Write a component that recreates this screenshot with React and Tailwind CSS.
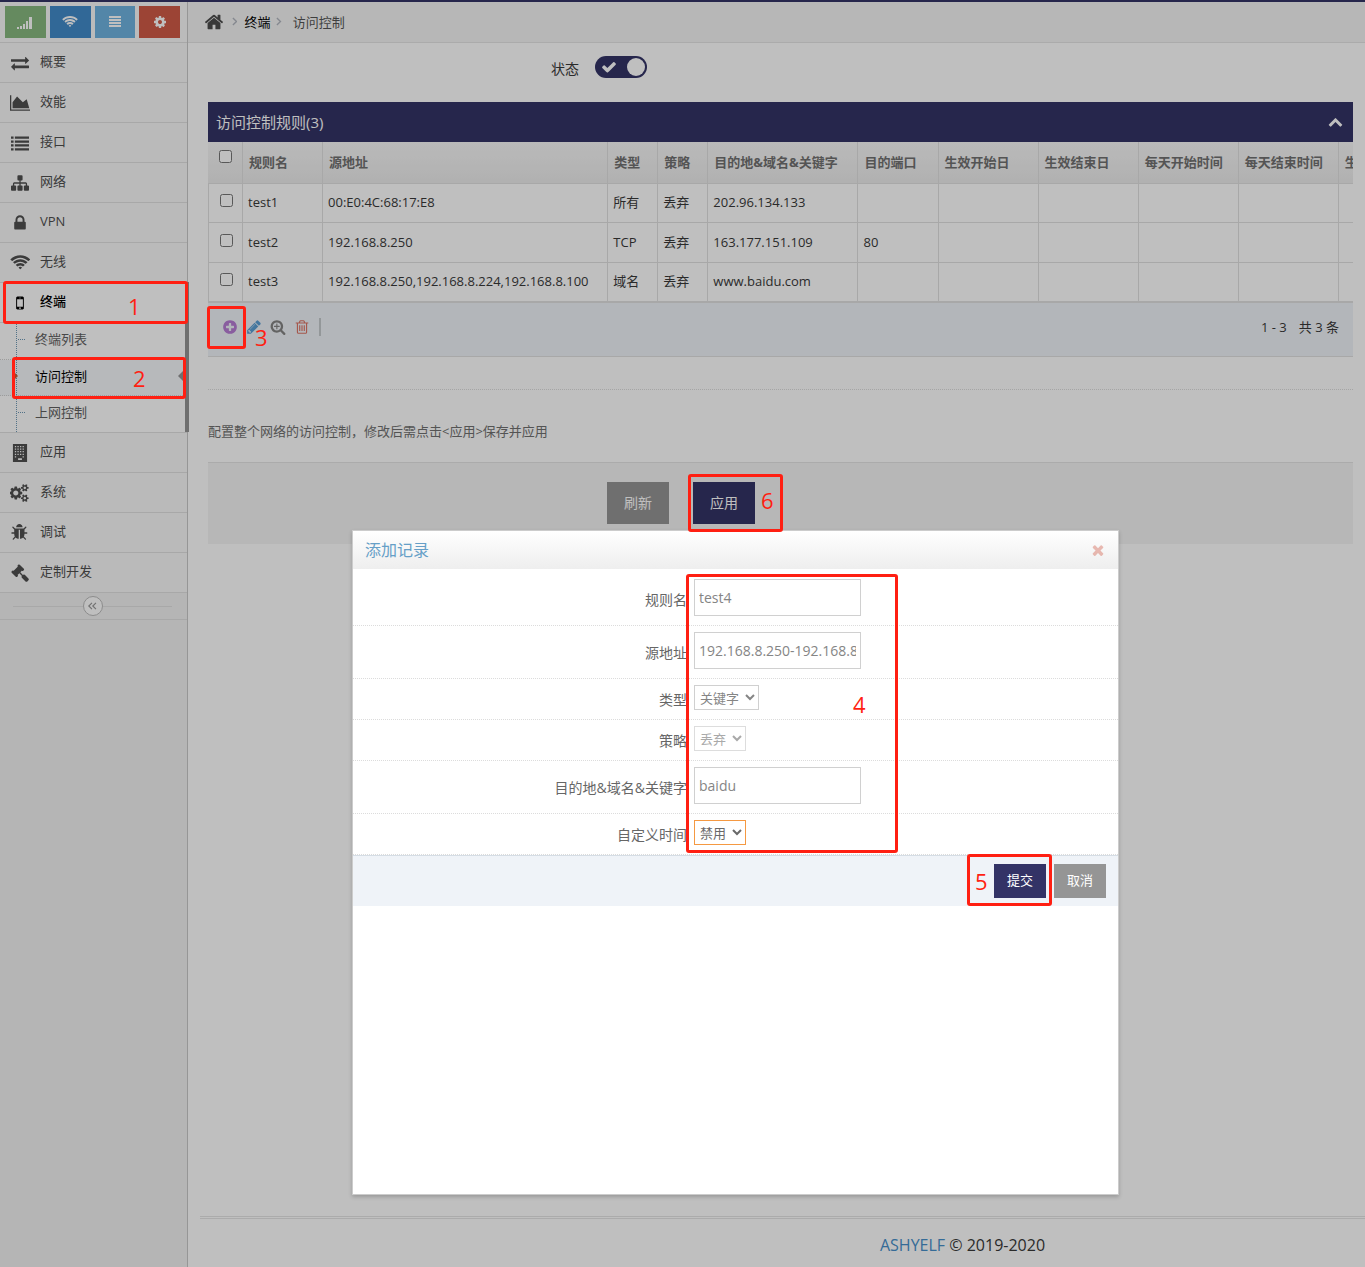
import React from "react";

const PATHS = {
  home: [1792, "M1472 992v480q0 26-19 45t-45 19h-384v-384h-256v384h-384q-26 0-45-19t-19-45v-480q0-1 .5-3t.5-3l575-474 575 474q1 2 1 6zm223-69l-62 74q-8 9-21 11h-3q-13 0-21-7l-692-577-692 577q-12 8-24 7-13-2-21-11l-62-74q-8-10-7-23.5t11-21.5l719-599q32-26 76-26t76 26l244 204v-195q0-14 9-23t23-9h192q14 0 23 9t9 23v408l219 182q10 8 11 21.5t-7 23.5z"],
  cog: [1792, "M1152 896q0-106-75-181t-181-75-181 75-75 181 75 181 181 75 181-75 75-181zm512-109v222q0 12-8 23t-20 13l-185 28q-19 54-39 91 35 50 107 138 10 12 10 25t-9 23q-27 37-99 108t-94 71q-12 0-26-9l-138-108q-44 23-91 38-16 136-29 186-7 28-36 28h-222q-14 0-24.5-8.5t-11.5-21.5l-28-184q-49-16-90-37l-141 107q-10 9-25 9-14 0-25-11-126-114-165-168-7-10-7-23 0-12 8-23 15-21 51-66.5t54-70.5q-27-50-41-99l-183-27q-13-2-21-12.5t-8-23.5v-222q0-12 8-23t19-13l186-28q14-46 39-92-40-57-107-138-10-12-10-24 0-10 9-23 26-36 98.5-107.5t94.5-71.5q13 0 26 10l138 107q44-23 91-38 16-136 29-186 7-28 36-28h222q14 0 24.5 8.5t11.5 21.5l28 184q49 16 90 37l142-107q9-9 24-9 13 0 25 10 129 119 165 170 7 8 7 22 0 12-8 23-15 21-51 66.5t-54 70.5q26 50 41 98l183 28q13 2 21 12.5t8 23.5z"],
  lock: [1792, "M640 768h512v-192q0-106-75-181t-181-75-181 75-75 181v192zm832 96v576q0 40-28 68t-68 28h-960q-40 0-68-28t-28-68v-576q0-40 28-68t68-28h32v-192q0-184 132-316t316-132 316 132 132 316v192h32q40 0 68 28t28 68z"],
  list: [1792, "M0 256h256v224H0zM384 256h1408v224H384zM0 640h256v224H0zM384 640h1408v224H384zM0 1024h256v224H0zM384 1024h1408v224H384zM0 1408h256v224H0zM384 1408h1408v224H384z"],
  justify: [1792, "M128 128h1536v256H128zM128 512h1536v256H128zM128 896h1536v256H128zM128 1280h1536v256H128z"],
  signal: [1904, "M0 1456h224v224H0zM336 1344h224v336H336zM672 1120h224v560H672zM1008 784h224v896h-224zM1344 336h336v1344h-336z"],
  sitemap: [1792, "M1792 1248v320q0 40-28 68t-68 28h-320q-40 0-68-28t-28-68v-320q0-40 28-68t68-28h96v-192h-512v192h96q40 0 68 28t28 68v320q0 40-28 68t-68 28h-320q-40 0-68-28t-28-68v-320q0-40 28-68t68-28h96v-192h-512v192h96q40 0 68 28t28 68v320q0 40-28 68t-68 28h-320q-40 0-68-28t-28-68v-320q0-40 28-68t68-28h96v-192q0-52 38-90t90-38h512v-192h-96q-40 0-68-28t-28-68v-320q0-40 28-68t68-28h320q40 0 68 28t28 68v320q0 40-28 68t-68 28h-96v192h512q52 0 90 38t38 90v192h96q40 0 68 28t28 68z"],
  exchange: [1792, "M1792 1184v192q0 13-9.5 22.5t-22.5 9.5h-1376v192q0 13-9.5 22.5t-22.5 9.5q-12 0-24-10l-319-320q-9-9-9-22 0-14 9-23l320-320q9-9 23-9 13 0 22.5 9.5t9.5 22.5v192h1376q13 0 22.5 9.5t9.5 22.5zm0-544q0 14-9 23l-320 320q-9 9-23 9-13 0-22.5-9.5t-9.5-22.5v-192h-1376q-13 0-22.5-9.5t-9.5-22.5v-192q0-13 9.5-22.5t22.5-9.5h1376v-192q0-14 9-23t23-9q12 0 24 10l319 319q9 9 9 23z"],
  area: [2048, "M2048 1536v128h-2048v-1536h128v1408h1920zm-384-1024l256 896h-1664v-576l448-576 576 576z"],
  mobile: [1792, "M976 1408q0-33-23.5-56.5t-56.5-23.5-56.5 23.5-23.5 56.5 23.5 56.5 56.5 23.5 56.5-23.5 23.5-56.5zm208-160v-704q0-13-9.5-22.5t-22.5-9.5h-512q-13 0-22.5 9.5t-9.5 22.5v704q0 13 9.5 22.5t22.5 9.5h512q13 0 22.5-9.5t9.5-22.5zm-192-848q0-16-16-16h-160q-16 0-16 16t16 16h160q16 0 16-16zm288-16v1024q0 52-38 90t-90 38h-512q-52 0-90-38t-38-90v-1024q0-52 38-90t90-38h512q52 0 90 38t38 90z"],
  plus: [1792, "M1344 960v-128q0-26-19-45t-45-19h-256v-256q0-26-19-45t-45-19h-128q-26 0-45 19t-19 45v256h-256q-26 0-45 19t-19 45v128q0 26 19 45t45 19h256v256q0 26 19 45t45 19h128q26 0 45-19t19-45v-256h256q26 0 45-19t19-45zm320-64q0 209-103 385.5t-279.5 279.5-385.5 103-385.5-103-279.5-279.5-103-385.5 103-385.5 279.5-279.5 385.5-103 385.5 103 279.5 279.5 103 385.5z"],
  pencil: [1792, "M491 1536l91-91-235-235-91 91v107h128v128h107zm523-928q0-22-22-22-10 0-17 7l-542 542q-7 7-7 17 0 22 22 22 10 0 17-7l542-542q7-7 7-17zm-54-192l416 416-832 832h-416v-416zm683 96q0 53-37 90l-166 166-416-416 166-165q36-38 90-38 53 0 91 38l235 234q37 39 37 91z"],
  zoom: [1792, "M1088 800v64q0 13-9.5 22.5t-22.5 9.5h-224v224q0 13-9.5 22.5t-22.5 9.5h-64q-13 0-22.5-9.5t-9.5-22.5v-224h-224q-13 0-22.5-9.5t-9.5-22.5v-64q0-13 9.5-22.5t22.5-9.5h224v-224q0-13 9.5-22.5t22.5-9.5h64q13 0 22.5 9.5t9.5 22.5v224h224q13 0 22.5 9.5t9.5 22.5zm128 32q0-185-131.5-316.5t-316.5-131.5-316.5 131.5-131.5 316.5 131.5 316.5 316.5 131.5 316.5-131.5 131.5-316.5zm512 832q0 53-37.5 90.5t-90.5 37.5q-54 0-90-38l-343-342q-179 124-399 124-143 0-273.5-55.5t-225-150-150-225-55.5-273.5 55.5-273.5 150-225 225-150 273.5-55.5 273.5 55.5 225 150 150 225 55.5 273.5q0 220-124 399l343 343q37 37 37 90z"],
  trash: [1792, "M704 736v576q0 14-9 23t-23 9h-64q-14 0-23-9t-9-23v-576q0-14 9-23t23-9h64q14 0 23 9t9 23zm256 0v576q0 14-9 23t-23 9h-64q-14 0-23-9t-9-23v-576q0-14 9-23t23-9h64q14 0 23 9t9 23zm256 0v576q0 14-9 23t-23 9h-64q-14 0-23-9t-9-23v-576q0-14 9-23t23-9h64q14 0 23 9t9 23zm128 724v-948h-896v948q0 22 7 40.5t14.5 27 10.5 8.5h832q3 0 10.5-8.5t14.5-27 7-40.5zm-672-1076h448l-48-117q-7-9-17-11h-317q-10 2-17 11zm928 32v64q0 14-9 23t-23 9h-96v948q0 83-47 143.5t-113 60.5h-832q-66 0-113-58.5t-47-141.5v-952h-96q-14 0-23-9t-9-23v-64q0-14 9-23t23-9h309l70-167q15-37 54-63t79-26h320q40 0 79 26t54 63l70 167h309q14 0 23 9t9 23z"],
  up: [1792, "M1683 1331l-166 165q-19 19-45 19t-45-19l-531-531-531 531q-19 19-45 19t-45-19l-166-165q-19-19-19-45.5t19-45.5l742-741q19-19 45-19t45 19l742 741q19 19 19 45.5t-19 45.5z"],
  check: [1792, "M1671 566q0 40-28 68l-724 724-136 136q-28 28-68 28t-68-28l-136-136-362-362q-28-28-28-68t28-68l136-136q28-28 68-28t68 28l294 295 656-657q28-28 68-28t68 28l136 136q28 28 28 68z"],
  times: [1792, "M1490 1322q0 40-28 68l-136 136q-28 28-68 28t-68-28l-294-294-294 294q-28 28-68 28t-68-28l-136-136q-28-28-28-68t28-68l294-294-294-294q-28-28-28-68t28-68l136-136q28-28 68-28t68 28l294 294 294-294q28-28 68-28t68 28l136 136q28 28 28 68t-28 68l-294 294 294 294q28 28 28 68z"],
  wifi: [2048, "M1024 1523q-20 0-93-73.5t-73-93.5q0-32 62.5-54t103.5-22 103.5 22 62.5 54q0 20-73 93.5t-93 73.5zm270-271q-2 0-40-25t-101.5-50-128.5-25-128.5 25-101 50-40.5 25q-18 0-93.5-75t-75.5-93q0-13 10-23 78-77 196-121t233-44 233 44 196 121q10 10 10 23 0 18-75.5 93t-93.5 75zm273-272q-11 0-23-8-136-105-252-154.5t-268-49.5q-85 0-170.5 22t-149 53-113.5 62-79 53-31 22q-17 0-92-75t-75-93q0-12 10-22 132-132 320-205t380-73 380 73 320 205q10 10 10 22 0 18-75 93t-92 75zm271-271q-11 0-22-9-179-157-371.5-236.5t-420.5-79.5-420.5 79.5-371.5 236.5q-11 9-22 9-17 0-92.5-75t-75.5-93q0-13 10-23 187-186 445-288t527-102 527 102 445 288q10 10 10 23 0 18-75.5 93t-92.5 75z"],
  building: [1792, "M192 0h1408v1792H192zM384 192v128h128v-128zM640 192v128h128v-128zM896 192v128h128v-128zM1152 192v128h128v-128zM384 448v128h128v-128zM640 448v128h128v-128zM896 448v128h128v-128zM1152 448v128h128v-128zM384 704v128h128v-128zM640 704v128h128v-128zM896 704v128h128v-128zM1152 704v128h128v-128zM384 960v128h128v-128zM640 960v128h128v-128zM896 960v128h128v-128zM1152 960v128h128v-128zM384 1216v128h128v-128zM1152 1216v128h128v-128zM704 1408v192h384v-192z"],
  cogs: [1920, "M832 896q0-106-75-181t-181-75-181 75-75 181 75 181 181 75 181-75 75-181zm768 512q0-52-38-90t-90-38-90 38-38 90q0 53 37.5 90.5t90.5 37.5 90.5-37.5 37.5-90.5zm0-1024q0-52-38-90t-90-38-90 38-38 90q0 53 37.5 90.5t90.5 37.5 90.5-37.5 37.5-90.5zm-384 421v185q0 10-7 19.5t-16 10.5l-155 24q-11 35-32 76 34 48 90 115 7 11 7 20 0 12-7 19-23 30-82.5 89.5t-78.5 59.5q-11 0-21-7l-115-90q-37 19-77 31-11 108-23 155-7 24-30 24h-186q-11 0-20-7.5t-10-17.5l-23-153q-34-10-75-31l-118 89q-7 7-20 7-11 0-21-8-144-133-144-160 0-9 7-19 10-14 41-53t47-61q-23-44-35-82l-152-24q-10-1-17-9.5t-7-19.5v-185q0-10 7-19.5t16-10.5l155-24q11-35 32-76-34-48-90-115-7-11-7-20 0-12 7-20 22-30 82-89t79-59q11 0 21 7l115 90q34-18 77-32 11-108 23-154 7-24 30-24h186q11 0 20 7.5t10 17.5l23 153q34 10 75 31l118-89q8-7 20-7 11 0 21 8 144 133 144 160 0 8-7 19-12 16-42 54t-45 60q23 48 34 82l152 23q10 2 17 10.5t7 19.5zm640 533v140q0 16-149 31-12 27-30 52 51 113 51 138 0 4-4 7-122 71-124 71-8 0-46-47t-52-68q-20 2-30 2t-30-2q-14 21-52 68t-46 47q-2 0-124-71-4-3-4-7 0-25 51-138-18-25-30-52-149-15-149-31v-140q0-16 149-31 13-29 30-52-51-113-51-138 0-4 4-7 4-2 35-20t59-34 30-16q8 0 46 46.5t52 67.5q20-2 30-2t30 2q51-71 92-112l6-2q4 0 124 70 4 3 4 7 0 25-51 138 17 23 30 52 149 15 149 31zm0-1024v140q0 16-149 31-12 27-30 52 51 113 51 138 0 4-4 7-122 71-124 71-8 0-46-47t-52-68q-20 2-30 2t-30-2q-14 21-52 68t-46 47q-2 0-124-71-4-3-4-7 0-25 51-138-18-25-30-52-149-15-149-31v-140q0-16 149-31 13-29 30-52-51-113-51-138 0-4 4-7 4-2 35-20t59-34 30-16q8 0 46 46.5t52 67.5q20-2 30-2t30 2q51-71 92-112l6-2q4 0 124 70 4 3 4 7 0 25-51 138 17 23 30 52 149 15 149 31z"],
  bug: [1792, "M1632 896q0 26-19 45t-45 19h-224q0 171-67 290l208 209q19 19 19 45t-19 45q-18 19-45 19t-45-19l-198-197q-5 5-15 13t-42 28.5-65 36.5-82 29-97 13v-896h-128v896q-51 0-101.5-13.5t-87-33-66-39-43.5-32.5l-15-14-183 207q-20 21-48 21-24 0-43-16-19-18-20.5-44.5t15.5-46.5l202-227q-58-114-58-274h-224q-26 0-45-19t-19-45 19-45 45-19h224v-294l-173-173q-19-19-19-45t19-45 45-19 45 19l173 173h844l173-173q19-19 45-19t45 19 19 45-19 45l-173 173v294h224q26 0 45 19t19 45zm-480-576h-640q0-133 93.5-226.5t226.5-93.5 226.5 93.5 93.5 226.5z"],
  gavel: [1792, "M1771 1536q0 53-37 90l-107 108q-39 37-91 37-53 0-90-37l-363-364q-38-36-38-90 0-53 43-96l-256-256-126 126q-14 14-34 14t-34-14q2 2 12.5 12t12.5 13 10 11.5 10 13.5 6 13.5 5.5 16.5 1.5 18q0 38-28 68-3 3-16.5 18t-19 20.5-18.5 16.5-22 15.5-22 9-26 4.5q-40 0-68-28l-408-408q-28-28-28-68 0-13 4.5-26t9-22 15.5-22 16.5-18.5 20.5-19 18-16.5q30-28 68-28 10 0 18 1.5t16.5 5.5 13.5 6 13.5 10 11.5 10 13 12.5 12 12.5q-14-14-14-34t14-34l348-348q14-14 34-14t34 14q-2-2-12.5-12t-12.5-13-10-11.5-10-13.5-6-13.5-5.5-16.5-1.5-18q0-38 28-68 3-3 16.5-18t19-20.5 18.5-16.5 22-15.5 22-9 26-4.5q40 0 68 28l408 408q28 28 28 68 0 13-4.5 26t-9 22-15.5 22-16.5 18.5-20.5 19-18 16.5q-30 28-68 28-10 0-18-1.5t-16.5-5.5-13.5-6-13.5-10-11.5-10-13-12.5-12-12.5q14 14 14 34t-14 34l-126 126 256 256q43-43 96-43 52 0 91 37l363 363q37 39 37 91z"],
};

function Icon({ name, className = "h-4" }) {
  const [w, d] = PATHS[name];
  return (
    <svg viewBox={`0 0 ${w} 1792`} className={`block w-auto shrink-0 ${className}`} fill="currentColor" fillRule={name === "building" ? "evenodd" : "nonzero"} aria-hidden="true">
      <path d={d} />
    </svg>
  );
}

function Angle({ className = "h-[9px]" }) {
  return (
    <svg viewBox="0 0 6 10" className={`block w-auto ${className}`} fill="none" stroke="currentColor" strokeWidth="1.5" aria-hidden="true">
      <path d="M1 1l4 4-4 4" />
    </svg>
  );
}

const SHORTCUTS = [
  ["signal", "信号", "bg-[#87b87f]"],
  ["wifi", "无线网络", "bg-[#428bca]"],
  ["justify", "列表", "bg-[#6fb3e0]"],
  ["cog", "设置", "bg-[#d15b47]"],
];

const MENU_TOP = [
  ["exchange", "概要"],
  ["area", "效能"],
  ["list", "接口"],
  ["sitemap", "网络"],
  ["lock", "VPN"],
  ["wifi", "无线"],
];

const MENU_BOTTOM = [
  ["building", "应用"],
  ["cogs", "系统"],
  ["bug", "调试"],
  ["gavel", "定制开发"],
];

const SUBMENU = [
  ["终端列表", false],
  ["访问控制", true],
  ["上网控制", false],
];

function MenuItem({ icon, label, active }) {
  return (
    <li className={`border-t border-[#e0e0e0] ${active ? "bg-white text-black" : "text-[#4f4f4f]"}`}>
      <a href="#" className="flex h-[39px] items-center pb-1">
        <span className="flex w-10 justify-center pt-1">
          <Icon name={icon} className="h-[18px]" />
        </span>
        <span className={active ? "font-medium" : ""}>{label}</span>
      </a>
    </li>
  );
}

function Sidebar() {
  return (
    <aside className="w-[188px] shrink-0 border-r border-[#c8c8c8] bg-[#f2f2f2]">
      <div className="flex h-10 gap-1 bg-[#fafafa] py-1 pr-[7px] pl-[5px]">
        {SHORTCUTS.map(([icon, label, bg]) => (
          <button key={icon} type="button" aria-label={label} className={`flex flex-1 items-center justify-center text-white ${bg}`}>
            <Icon name={icon} className={icon === "signal" ? "h-4" : "h-[14px]"} />
          </button>
        ))}
      </div>
      <ul className="bg-[#f8f8f8] text-[13px]">
        {MENU_TOP.map(([icon, label]) => (
          <MenuItem key={label} icon={icon} label={label} />
        ))}
        <li className="relative bg-white">
          <ul>
            <MenuItem icon="mobile" label="终端" active />
          </ul>
          <ul className="border-t border-[#e0e0e0]">
            {SUBMENU.map(([label, active]) => (
              <li key={label} className={`relative h-9 border-b border-dotted border-[#d0d0d0] first:h-[37px] last:border-none ${active ? "bg-[#f5f7fa] text-black" : "text-[#616161]"}`}>
                <a href="#" className="flex h-full items-center pb-1 pl-[35px]">{label}</a>
                <span className="absolute inset-y-0 left-4 border-l border-dotted border-[#6d97b5]" />
                {active ? (
                  <>
                    <span className="absolute top-3 left-[14px] border-y-4 border-l-4 border-y-transparent border-l-[#c86139]" />
                    <span className="absolute top-[9px] right-[2px] border-y-[7px] border-r-[7px] border-y-transparent border-r-[#959595]" />
                  </>
                ) : (
                  <span className="absolute top-4 left-[18px] w-[7px] border-t border-dotted border-[#6d97b5]" />
                )}
              </li>
            ))}
          </ul>
          <span className="absolute inset-y-0 -right-[2px] w-1 bg-[#959595]" />
        </li>
        {MENU_BOTTOM.map(([icon, label]) => (
          <MenuItem key={label} icon={icon} label={label} />
        ))}
      </ul>
      <div className="flex h-7 items-center border-y border-[#e0e0e0] px-[13px]">
        <span className="flex-1 border-t border-[#e0e0e0]" />
        <button type="button" aria-label="收起菜单" className="flex h-5 w-5 items-center justify-center rounded-full border border-[#bbb] bg-white text-[#999]">
          <Angle className="h-2 rotate-180" />
          <Angle className="-ml-px h-2 rotate-180" />
        </button>
        <span className="mr-[2px] flex-1 border-t border-[#e0e0e0]" />
      </div>
    </aside>
  );
}

const COLUMNS = [
  ["规则名", "w-[80px]"],
  ["源地址", "w-[285px]"],
  ["类型", "w-[50px]"],
  ["策略", "w-[50px]"],
  ["目的地&域名&关键字", "w-[150px]"],
  ["目的端口", "w-[80px]"],
  ["生效开始日", "w-[100px]"],
  ["生效结束日", "w-[100px]"],
  ["每天开始时间", "w-[100px]"],
  ["每天结束时间", "w-[100px]"],
  ["生效星期", "w-[100px]"],
];

const ROWS = [
  ["test1", "00:E0:4C:68:17:E8", "所有", "丢弃", "202.96.134.133", "", "", "", "", "", ""],
  ["test2", "192.168.8.250", "TCP", "丢弃", "163.177.151.109", "80", "", "", "", "", ""],
  ["test3", "192.168.8.250,192.168.8.224,192.168.8.100", "域名", "丢弃", "www.baidu.com", "", "", "", "", "", ""],
];

function RulesTable() {
  return (
    <section>
      <header className="flex h-10 items-center justify-between bg-[#333366] pr-[10px] pl-2 text-white">
        <h2 className="text-[15px]">访问控制规则(3)</h2>
        <button type="button" aria-label="折叠" className="pb-[2px]">
          <Icon name="up" className="h-[15px]" />
        </button>
      </header>
      <div className="overflow-hidden border-b border-[#e1e1e1]">
        <table className="w-[1231px] min-w-full table-fixed border-separate border-spacing-0 text-left text-[13px] whitespace-nowrap">
          <thead>
            <tr className="h-[42px] bg-linear-to-b from-[#f8f8f8] to-[#ececec] text-[#707070]">
              <th className="w-[35px] border-r border-b border-[#e1e1e1] pb-3 text-center">
                <input type="checkbox" aria-label="全选" className="block mx-auto size-[13px]" />
              </th>
              {COLUMNS.map(([label, w]) => (
                <th key={label} className={`border-r border-b border-[#e1e1e1] px-[6px] pb-[2px] font-bold ${w}`}>{label}</th>
              ))}
            </tr>
          </thead>
          <tbody>
            {ROWS.map((row) => (
              <tr key={row[0]} className="h-[39px] text-[#393939] even:h-10">
                <td className="border-r border-b border-l border-[#e1e1e1] pb-[5px] pl-[2px]">
                  <input type="checkbox" aria-label={row[0]} className="block mx-auto size-[13px]" />
                </td>
                {row.map((cell, i) => (
                  <td key={i} className="border-r border-b border-[#e1e1e1] px-[5px] pb-[2px]">{cell}</td>
                ))}
              </tr>
            ))}
          </tbody>
        </table>
      </div>
      <div className="flex h-[54px] items-center justify-between border-b border-[#e1e1e1] bg-[#eff3f8] pr-[14px] pb-[6px] pl-[14px] text-[13px] text-[#393939]">
        <div className="flex items-center gap-2">
          <button type="button" aria-label="添加" className="text-[#b77cd4]"><Icon name="plus" className="h-4" /></button>
          <button type="button" aria-label="编辑" className="text-[#5a9fd4]"><Icon name="pencil" className="h-4" /></button>
          <button type="button" aria-label="查找" className="text-[#858585]"><Icon name="zoom" className="h-4" /></button>
          <button type="button" aria-label="删除" className="text-[#dd7566]"><Icon name="trash" className="h-4" /></button>
          <span className="ml-px h-[18px] w-[2px] bg-[#c4cacc]" />
        </div>
        <p className="flex gap-3"><span>1 - 3</span><span>共 3 条</span></p>
      </div>
    </section>
  );
}

function Field({ label, id, first, children }) {
  return (
    <div className={`flex items-start border-b border-dotted border-[#dcdcdc] pb-[9px] ${first ? "pt-[10px]" : "pt-[6px]"}`}>
      <label htmlFor={id} className="flex w-[334px] shrink-0 items-center justify-end self-stretch pt-1 text-sm text-[#666]">{label}</label>
      <div className="pl-[7px]">{children}</div>
    </div>
  );
}

function TextField({ id, label, value, first }) {
  return (
    <Field label={label} id={id} first={first}>
      <input id={id} type="text" defaultValue={value} className="block h-[37px] w-[167px] border border-[#d0d0d0] bg-white px-1 text-sm text-[#858585] outline-none" />
    </Field>
  );
}

function SelectField({ id, label, value, look, disabled }) {
  return (
    <Field label={label} id={id}>
      <select id={id} disabled={disabled} className={`block h-[25px] border bg-white px-[1px] text-[13px] outline-none ${look}`}>
        <option>{value}</option>
      </select>
    </Field>
  );
}

function AddDialog() {
  return (
    <div role="dialog" aria-label="添加记录" className="absolute top-[530px] left-[352px] h-[665px] w-[767px] border border-[#ccc] bg-white shadow-[0_2px_4px_rgba(0,0,0,0.2)]">
      <header className="flex h-[38px] items-center justify-between bg-linear-to-b from-white to-[#eeeeee] pr-3 pl-3">
        <h2 className="text-base text-[#669fc7]">添加记录</h2>
        <button type="button" aria-label="关闭" className="text-[#d15b47] opacity-40"><Icon name="times" className="h-4" /></button>
      </header>
      <form>
        <TextField id="name" label="规则名" value="test4" first />
        <TextField id="source" label="源地址" value="192.168.8.250-192.168.8.254" />
        <SelectField id="type" label="类型" value="关键字" look="w-[65px] border-[#d0d0d0] text-[#858585]" />
        <SelectField id="policy" label="策略" value="丢弃" disabled look="w-[52px] border-[#d0d0d0] text-[#858585] opacity-70" />
        <TextField id="target" label="目的地&域名&关键字" value="baidu" />
        <SelectField id="time" label="自定义时间" value="禁用" look="w-[52px] border-[#f59942] text-[#696969]" />
        <div className="flex h-[51px] items-center justify-end gap-2 border-t border-[#d5dde5] bg-[#eff3f8] pr-3 text-[13px] text-white">
          <button type="button" className="h-[34px] w-[52px] bg-[#333366] pb-[2px]">提交</button>
          <button type="button" className="h-[34px] w-[52px] bg-[#959595] pb-[2px]">取消</button>
        </div>
      </form>
    </div>
  );
}

// Numbered step markers that float above the page and the dialog.
const MARKS = [
  ["1", "left-[3px] top-[281px] w-[185px] h-[43px]", "left-[128px] top-[290px]"],
  ["2", "left-[12px] top-[357px] w-[174px] h-[42px]", "left-[133px] top-[362px]"],
  ["3", "left-[207px] top-[306px] w-[39px] h-[43px]", "left-[255px] top-[321px]"],
  ["4", "left-[686px] top-[574px] w-[212px] h-[279px]", "left-[853px] top-[688px]"],
  ["5", "left-[967px] top-[854px] w-[85px] h-[52px]", "left-[975px] top-[865px]"],
  ["6", "left-[688px] top-[474px] w-[95px] h-[58px]", "left-[761px] top-[484px]"],
];

export default function App() {
  return (
    <div className="relative flex min-h-screen flex-col overflow-hidden bg-white font-['Open_Sans','Noto_Sans_CJK_SC',sans-serif] leading-5 text-[#393939]">
      <div className="h-[2px] bg-[#333366]" />
      <div className="flex flex-1">
        <Sidebar />
        <main className="flex min-w-0 flex-1 flex-col">
          <nav className="flex h-[41px] items-center border-b border-[#e5e5e5] bg-[#f5f5f5] pb-px pl-4 text-[13px] text-[#555]">
            <a href="#" aria-label="首页" className="text-[#4c4c4c]"><Icon name="home" className="h-5" /></a>
            <Angle className="ml-2 h-[9px] text-[#b2b6bf]" />
            <a href="#" className="ml-[7px] text-black">终端</a>
            <Angle className="ml-[6px] h-[9px] text-[#b2b6bf]" />
            <span className="ml-[11px]">访问控制</span>
          </nav>
          <div className="pr-3 pl-5">
            <div className="flex h-[59px] items-center pl-[343px]">
              <label htmlFor="status" className="mt-[-8px] text-sm">状态</label>
              <span className="relative mt-[-12px] ml-4 flex">
                <input id="status" type="checkbox" defaultChecked className="h-[22px] w-[52px] appearance-none rounded-full bg-[#333366]" />
                <span className="pointer-events-none absolute inset-0 flex items-center justify-between pr-[2px] pl-[6px] text-white">
                  <Icon name="check" className="h-4" />
                  <span className="size-[18px] rounded-full bg-white" />
                </span>
              </span>
            </div>
            <RulesTable />
            <hr className="mt-8 border-dotted border-[#dcdcdc]" />
            <p className="mt-[31px] text-[13px] text-[#707070]">配置整个网络的访问控制，修改后需点击&lt;应用&gt;保存并应用</p>
            <div className="mt-[21px] flex h-[82px] justify-center gap-6 border-t border-[#e5e5e5] bg-[#f5f5f5] pt-[19px] pr-[199px] text-sm text-white">
              <button type="button" className="h-[42px] w-[62px] bg-[#959595]">刷新</button>
              <button type="button" className="h-[42px] w-[62px] bg-[#333366]">应用</button>
            </div>
          </div>
          <footer className="mt-auto ml-3 h-[51px] border-t-3 border-double border-[#e5e5e5] pt-[14px] pl-[360px] text-center text-base">
            <strong className="font-medium text-[#478fca]">ASHYELF</strong> © 2019-2020
          </footer>
        </main>
      </div>
      <div className="absolute inset-0 bg-black/25" />
      <AddDialog />
      {MARKS.map(([n, box, num]) => (
        <React.Fragment key={n}>
          <span className={`pointer-events-none absolute rounded-[3px] border-3 border-[#ff1f12] ${box}`} />
          <span className={`pointer-events-none absolute text-[22px] leading-8 text-[#ff1f12] ${num}`}>{n}</span>
        </React.Fragment>
      ))}
    </div>
  );
}
